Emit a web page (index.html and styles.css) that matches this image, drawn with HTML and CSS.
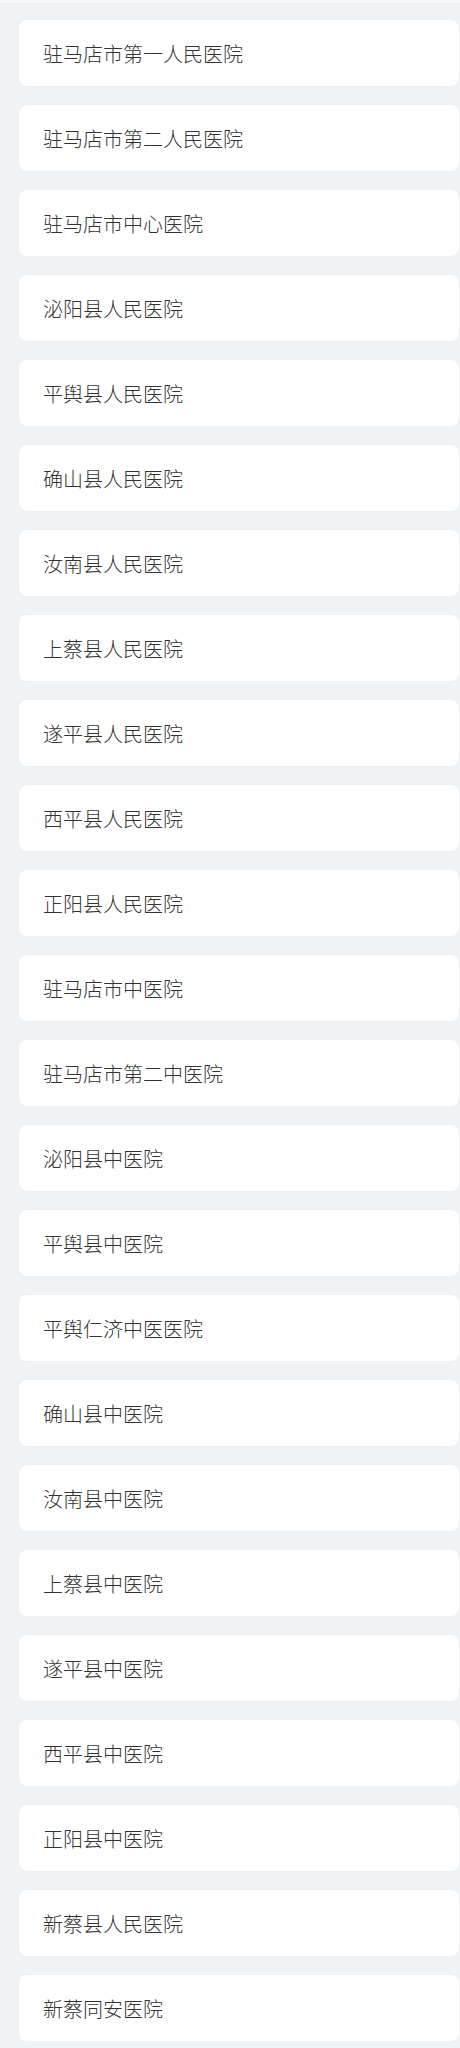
FILE: index.html
```html
<!DOCTYPE html>
<html lang="zh">
<head>
<meta charset="utf-8">
<link rel="stylesheet" href="styles.css">
</head>
<body>
<div class="topbar"></div>
<ul class="list">
<li class="item">驻马店市第一人民医院</li>
<li class="item">驻马店市第二人民医院</li>
<li class="item">驻马店市中心医院</li>
<li class="item">泌阳县人民医院</li>
<li class="item">平舆县人民医院</li>
<li class="item">确山县人民医院</li>
<li class="item">汝南县人民医院</li>
<li class="item">上蔡县人民医院</li>
<li class="item">遂平县人民医院</li>
<li class="item">西平县人民医院</li>
<li class="item">正阳县人民医院</li>
<li class="item">驻马店市中医院</li>
<li class="item">驻马店市第二中医院</li>
<li class="item">泌阳县中医院</li>
<li class="item">平舆县中医院</li>
<li class="item">平舆仁济中医医院</li>
<li class="item">确山县中医院</li>
<li class="item">汝南县中医院</li>
<li class="item">上蔡县中医院</li>
<li class="item">遂平县中医院</li>
<li class="item">西平县中医院</li>
<li class="item">正阳县中医院</li>
<li class="item">新蔡县人民医院</li>
<li class="item">新蔡同安医院</li>
</ul>
</body>
</html>
```
FILE: styles.css
```css
html, body {
  margin: 0;
  padding: 0;
  background: #f0f3f6;
}
body {
  font-family: "Noto Sans CJK SC", "Noto Sans", sans-serif;
}
.topbar {
  height: 3px;
  background: #f6f8fa;
  border-bottom: 1px solid #e9edf1;
}
.list {
  list-style: none;
  margin: 0;
  padding: 16px 1px 0 19px;
  display: flex;
  flex-direction: column;
  gap: 19px;
}
.item {
  height: 66px;
  box-sizing: border-box;
  display: flex;
  align-items: center;
  padding-left: 24px;
  background: #ffffff;
  border-radius: 8px;
  box-shadow: 0 0 2px rgba(0, 0, 0, 0.04);
  font-size: 20px;
  font-weight: 300;
  color: #333333;
}
```
